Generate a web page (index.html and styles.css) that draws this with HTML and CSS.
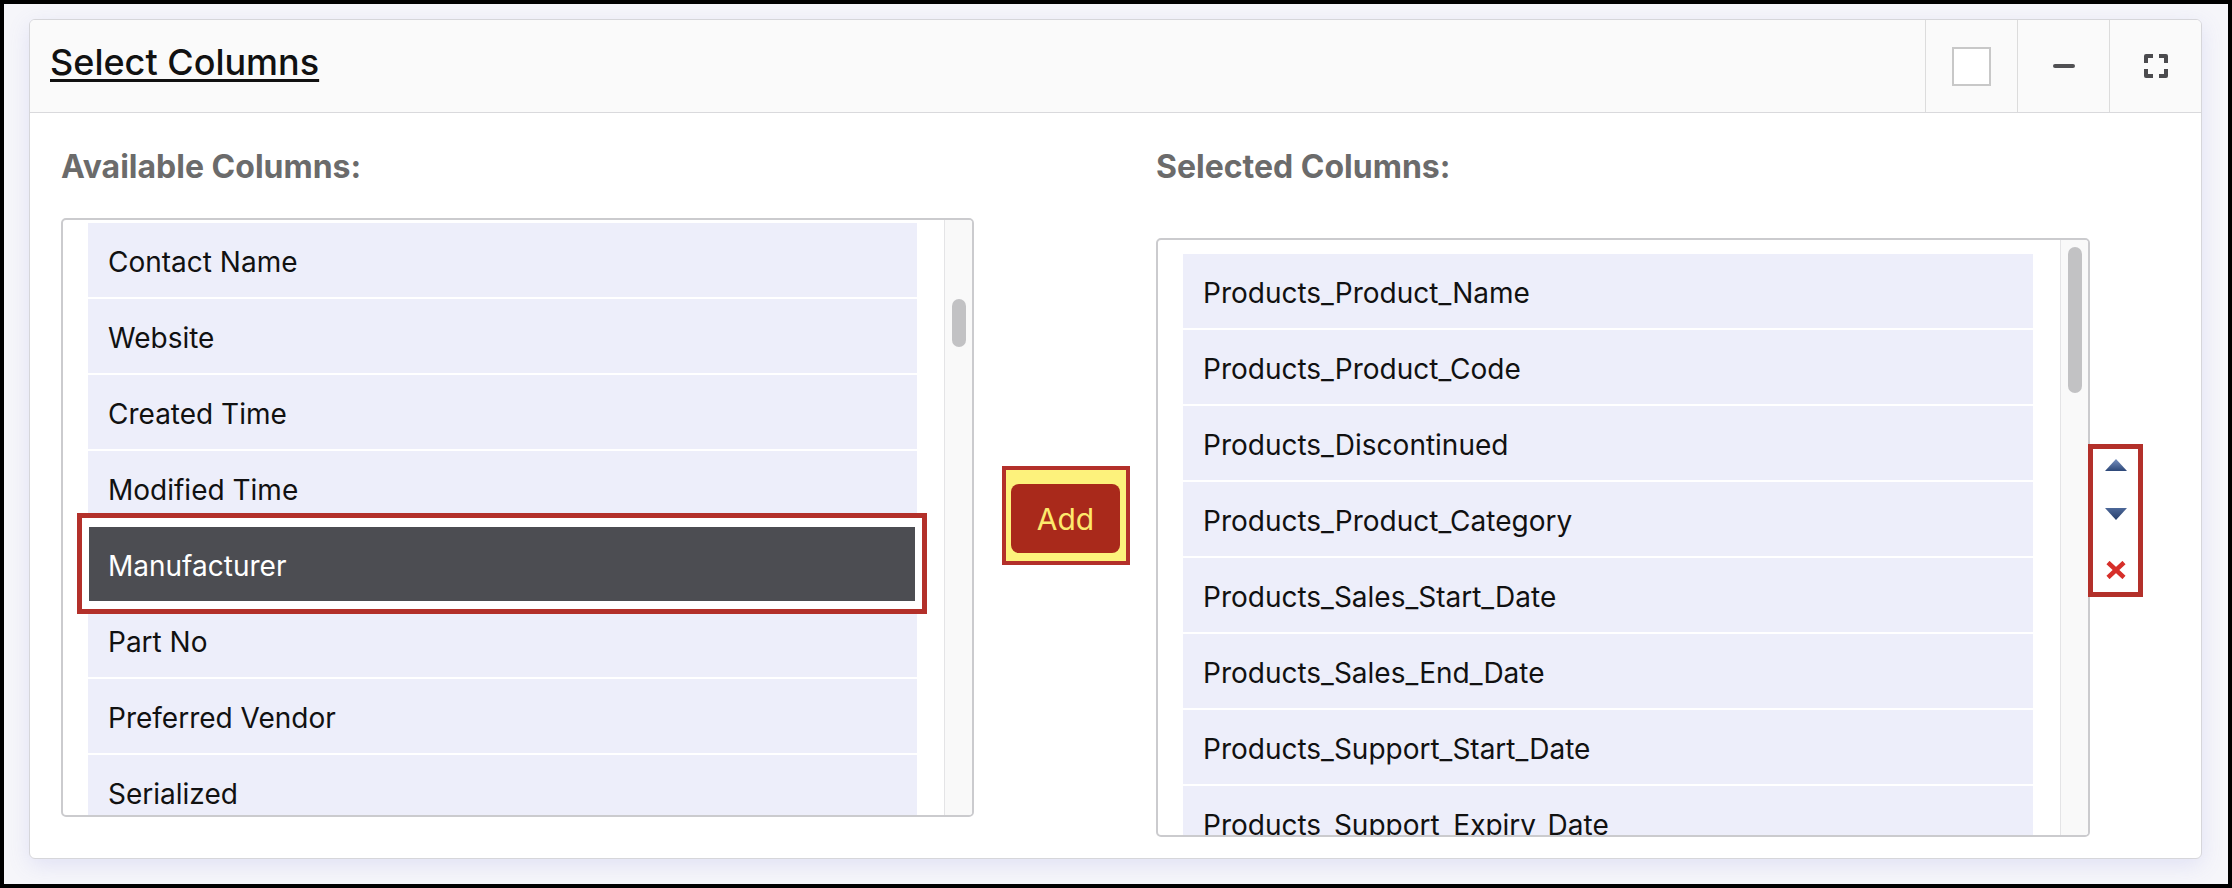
FILE: index.html
```html
<!DOCTYPE html>
<html lang="en">

<head>
    <meta charset="utf-8">
    <title>Select Columns</title>
    <link rel="stylesheet" href="styles.css">
</head>

<body>
    <div class="panel">
        <div class="panel_head">
            <h2 class="panel_title"><span>Select Columns</span></h2>
            <div class="head_btn"><span class="check_box"></span></div>
            <div class="head_btn"><span class="minus"></span></div>
            <div class="head_btn">
                <svg class="full_icon" width="24" height="24" viewBox="0 0 24 24">
                    <path d="M2 9V2h7M15 2h7v7M22 15v7h-7M9 22H2v-7" fill="none" stroke="#4b4b4e" stroke-width="4"
                        stroke-linejoin="round" />
                </svg>
            </div>
        </div>

        <div class="panel_body">
            <div class="col_left">
                <div class="col_label">Available Columns:</div>
                <div class="list list_left">
                    <ul class="list_scroll">
                        <li class="list_item">Contact Name</li>
                        <li class="list_item">Website</li>
                        <li class="list_item">Created Time</li>
                        <li class="list_item">Modified Time</li>
                        <li class="list_item on">Manufacturer</li>
                        <li class="list_item">Part No</li>
                        <li class="list_item">Preferred Vendor</li>
                        <li class="list_item">Serialized</li>
                        <li class="list_item">Product Active</li>
                    </ul>
                    <div class="track"><span class="thumb thumb_left"></span></div>
                </div>
            </div>

            <div class="col_mid">
                <div class="add_mark">
                    <button type="button" class="btn_add">Add</button>
                </div>
            </div>

            <div class="col_right">
                <div class="col_label">Selected Columns:</div>
                <div class="right_row">
                    <div class="list list_right">
                        <ul class="list_scroll">
                            <li class="list_item">Products_Product_Name</li>
                            <li class="list_item">Products_Product_Code</li>
                            <li class="list_item">Products_Discontinued</li>
                            <li class="list_item">Products_Product_Category</li>
                            <li class="list_item">Products_Sales_Start_Date</li>
                            <li class="list_item">Products_Sales_End_Date</li>
                            <li class="list_item">Products_Support_Start_Date</li>
                            <li class="list_item">Products_Support_Expiry_Date</li>
                        </ul>
                        <div class="track"><span class="thumb thumb_right"></span></div>
                    </div>
                    <div class="move_mark">
                        <svg class="move_up" width="22" height="12" viewBox="0 0 22 12">
                            <defs>
                                <linearGradient id="gUp" x1="0" y1="0" x2="0" y2="1">
                                    <stop offset="0" stop-color="#7891c0" />
                                    <stop offset="1" stop-color="#2c4778" />
                                </linearGradient>
                            </defs>
                            <polygon points="11,0 22,12 0,12" fill="url(#gUp)" />
                        </svg>
                        <svg class="move_down" width="22" height="12" viewBox="0 0 22 12">
                            <defs>
                                <linearGradient id="gDown" x1="0" y1="0" x2="0" y2="1">
                                    <stop offset="0" stop-color="#4d6899" />
                                    <stop offset="1" stop-color="#253d6a" />
                                </linearGradient>
                            </defs>
                            <polygon points="0,0 22,0 11,12" fill="url(#gDown)" />
                        </svg>
                        <svg class="move_del" width="22" height="18" viewBox="0 0 22 18">
                            <path d="M3 1.5L19 16.5M19 1.5L3 16.5" stroke="#d62f2a" stroke-width="4.5" />
                        </svg>
                    </div>
                </div>
            </div>
        </div>
    </div>
</body>

</html>
```

FILE: styles.css
```css
* {
    padding: 0;
    margin: 0;
    box-sizing: border-box;
}

ul,
li {
    list-style: none;
}

html,
body {
    height: 100%;
}

body {
    font-family: Inter, "Noto Sans", sans-serif;
    color: #111;
    background: #f6f6fa;
    border: 4px solid #000;
    padding: 15px 26px 0 25px;
}

.panel {
    background: #fff;
    border: 1px solid #d6d6da;
    border-radius: 6px;
    box-shadow: 0 6px 22px rgba(110, 120, 220, 0.16);
    overflow: hidden;
}

.panel_head {
    display: flex;
    height: 93px;
    background: #fafafa;
    border-bottom: 1px solid #d9d9dc;
}

.panel_title {
    flex: 1;
    display: flex;
    align-items: center;
    padding: 0 0 8px 20px;
    font-size: 36px;
    font-weight: 500;
}

.panel_title span {
    text-decoration: underline;
    text-decoration-thickness: 3px;
    text-underline-offset: 4px;
}

.head_btn {
    width: 92px;
    border-left: 1px solid #dcdcdc;
    display: flex;
    align-items: center;
    justify-content: center;
}

.check_box {
    width: 39px;
    height: 39px;
    background: #fff;
    border: 2px solid #c8c8c8;
}

.minus {
    width: 22px;
    height: 4px;
    border-radius: 2px;
    background: #505053;
}

.panel_body {
    display: flex;
    padding: 36px 0 21px 31px;
}

.col_label {
    font-size: 32px;
    line-height: 36px;
    font-weight: 700;
    color: #6b6b6b;
}

.col_left {
    width: 913px;
}

.col_left .list {
    margin-top: 33px;
}

.col_mid {
    margin: 69px 26px 0 28px;
    height: 599px;
    display: flex;
    align-items: center;
}

.add_mark {
    border: 4px solid #b3302a;
    background: #fdf27c;
    padding: 14px 6px 8px 5px;
    margin-bottom: 4px;
}

.btn_add {
    display: block;
    width: 109px;
    height: 69px;
    border: 0;
    border-radius: 8px;
    background: #a9291b;
    color: #fde96c;
    font-family: Inter, "Noto Sans", sans-serif;
    font-size: 30px;
    cursor: pointer;
}

.right_row {
    display: flex;
    align-items: flex-start;
    margin-top: 53px;
}

.list {
    display: flex;
    height: 599px;
    border: 2px solid #cbcbce;
    border-radius: 5px;
    overflow: hidden;
}

.list_left {
    width: 913px;
}

.list_right {
    width: 934px;
}

.list_scroll {
    flex: 1;
    overflow: hidden;
    padding: 3px 27px 0 25px;
}

.list_right .list_scroll {
    padding-top: 14px;
}

.list_item {
    height: 74px;
    margin-bottom: 2px;
    padding: 3px 0 0 20px;
    display: flex;
    align-items: center;
    background: #edeefa;
    font-size: 28px;
    white-space: nowrap;
}

.list_item.on {
    position: relative;
    z-index: 1;
    background: #4c4d52;
    color: #fff;
}

/* red mark round the chosen row */
.list_item.on::after {
    content: "";
    position: absolute;
    top: -14px;
    bottom: -13px;
    left: -11px;
    right: -10px;
    border: 5px solid #b3302a;
    box-shadow: inset 0 0 0 7px #fff;
}

.track {
    width: 28px;
    background: #f9f9f9;
    border-left: 1px solid #e4e4e6;
}

.thumb {
    display: block;
    width: 14px;
    margin: 0 auto;
    border-radius: 7px;
    background: #c2c2c4;
}

.thumb_left {
    margin-top: 79px;
    height: 48px;
}

.thumb_right {
    margin-top: 7px;
    height: 146px;
}

.move_mark {
    width: 55px;
    height: 153px;
    margin: 206px 0 0 -2px;
    border: 5px solid #b3302a;
    background: #fff;
    display: flex;
    flex-direction: column;
    align-items: center;
}

.move_mark svg {
    display: block;
}

.move_up {
    margin-top: 10px;
}

.move_down {
    margin-top: 37px;
}

.move_del {
    margin-top: 41px;
}
```
